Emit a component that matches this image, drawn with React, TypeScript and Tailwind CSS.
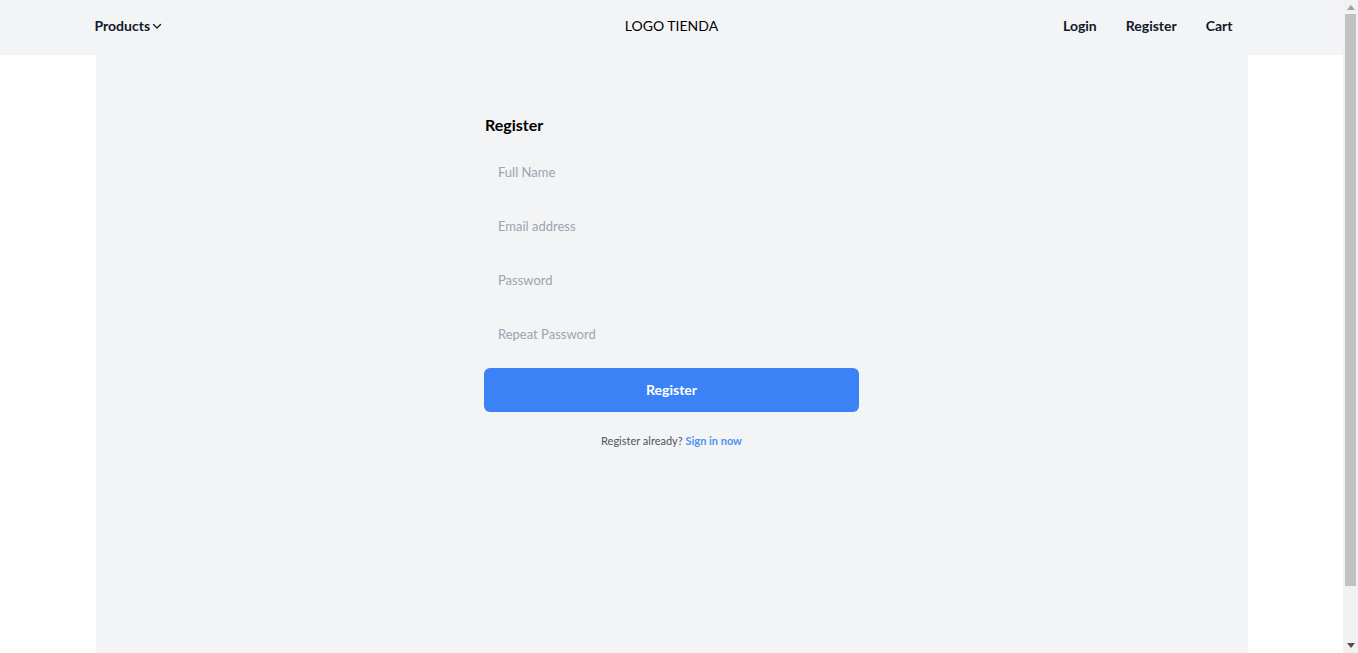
import React from "react";

function Chevron() {
  return (
    <svg width="12" height="12" viewBox="0 0 24 24" fill="none" stroke="currentColor" strokeWidth="2.5" strokeLinecap="round" strokeLinejoin="round" className="ml-[1px] mt-[1px]">
      <path d="M5 9l7 7 7-7" />
    </svg>
  );
}

function Field({ placeholder, type = "text" }: { placeholder: string; type?: string }) {
  return (
    <input
      type={type}
      placeholder={placeholder}
      className="h-11 w-full bg-transparent px-[14px] text-[13px] text-[#111827] placeholder:text-[#9ca3af] outline-none"
    />
  );
}

function Scrollbar() {
  return (
    <div className="flex h-[653px] w-[15px] shrink-0 flex-col bg-[#f1f1f1]">
      <div className="flex h-[14px] items-center justify-center">
        <svg width="8" height="5" viewBox="0 0 8 5"><path d="M4 0L8 5H0z" fill="#a3a3a3" /></svg>
      </div>
      <div className="mx-[2px] h-[572px] bg-[#c1c1c1]" />
      <div className="flex-1" />
      <div className="flex h-[15px] items-center justify-center">
        <svg width="8" height="5" viewBox="0 0 8 5"><path d="M0 0H8L4 5z" fill="#505050" /></svg>
      </div>
    </div>
  );
}

export default function App() {
  return (
    <div className="flex h-[653px] overflow-hidden bg-white text-[#111827]" style={{ fontFamily: 'Lato, "Noto Sans", sans-serif' }}>
      <div className="flex min-w-0 flex-1 flex-col">
        <header className="h-[55px] shrink-0 bg-[#f3f4f6]">
          <div className="mx-auto grid h-full max-w-6xl grid-cols-3 items-center pb-[4px] pl-[-1px]">
            <div className="flex items-center">
              <span className="-ml-[1px] flex items-center text-[14px] font-bold">
                Products
                <Chevron />
              </span>
            </div>
            <div className="flex justify-center">
              <span className="text-[14px] text-black">LOGO TIENDA</span>
            </div>
            <div className="flex justify-end gap-[29px] pr-[15px] text-[14px] font-bold">
              <span>Login</span>
              <span>Register</span>
              <span>Cart</span>
            </div>
          </div>
        </header>
        <main className="mx-auto w-full max-w-6xl flex-1 bg-[#f3f4f6] pt-[58px]">
          <form className="mx-auto flex w-[375px] flex-col" onSubmit={(e) => e.preventDefault()}>
            <h2 className="px-[1px] text-[16px] leading-6 font-bold text-black">Register</h2>
            <div className="mt-[13px] flex flex-col gap-[10px]">
              <Field placeholder="Full Name" />
              <Field placeholder="Email address" type="email" />
              <Field placeholder="Password" type="password" />
              <Field placeholder="Repeat Password" type="password" />
            </div>
            <button type="submit" className="mt-3 h-11 w-full rounded-md bg-[#3b82f6] pb-[2px] text-[14px] font-bold text-white">
              Register
            </button>
            <p className="mt-[21px] text-center text-[11px] leading-4 text-[#4b5563]">
              Register already? <a href="#" className="font-bold text-[#4b93f4]">Sign in now</a>
            </p>
          </form>
        </main>
      </div>
      <Scrollbar />
    </div>
  );
}
